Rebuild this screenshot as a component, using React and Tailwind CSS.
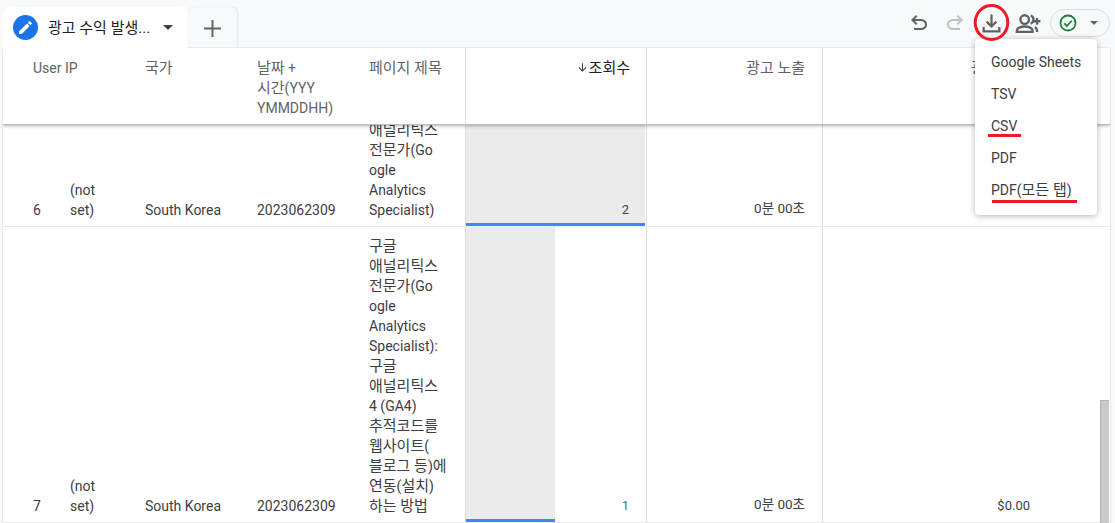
import React from "react";

function K({ children }) {
  const parts = String(children).split(/([\uac00-\ud7a3]+(?: [\uac00-\ud7a3]+)*)/);
  return (
    <>
      {parts.map((p, i) =>
        i % 2 === 1 ? <span key={i} className="text-[15px]">{p}</span> : <React.Fragment key={i}>{p}</React.Fragment>
      )}
    </>
  );
}

function Undo({ flip, color }) {
  return (
    <svg viewBox="0 0 24 24" width="24" height="24" fill={color} className={flip ? "-scale-x-100" : ""}>
      <path d="M7 19v-2h7.1q1.575 0 2.738-1T18 13.5q0-1.5-1.162-2.5T14.1 10H7.8l2.6 2.6L9 14 4 9l5-5 1.4 1.4L7.8 8h6.3q2.425 0 4.163 1.575T20 13.5q0 2.35-1.738 3.925T14.1 19z" />
    </svg>
  );
}

function Row({ h, index, title, views, viewsBar, revenue }) {
  return (
    <div className={`flex shrink-0 items-stretch border-b border-[#e8eaed] text-[14px] leading-5 text-[#3c4043] ${h}`}>
      <div className="w-[30px] shrink-0" />
      <div className="flex w-[37px] shrink-0 items-end pb-[6px]">{index}</div>
      <div className="flex w-[75px] shrink-0 items-end pb-[6px]"><span>(not<br />set)</span></div>
      <div className="flex w-[112px] shrink-0 items-end pb-[6px]"><span>South Korea</span></div>
      <div className="flex w-[112px] shrink-0 items-end pb-[6px]">2023062309</div>
      <div className="flex w-[96px] shrink-0 flex-col justify-end overflow-visible pb-[6px]">{title}</div>
      <div className="relative flex w-[181px] shrink-0 flex-col justify-end border-l border-[#dadce0] pr-[17px] pb-[6px] text-right text-[13px]">
        <div className="absolute top-0 bottom-0 left-0 flex flex-col" style={{ width: viewsBar }}>
          <div className="flex-1 bg-[#ebebeb]" />
          <div className="h-[3px] bg-[#4285f4]" />
        </div>
        <span className={`relative ${views === "1" ? "text-[#1a73a8]" : ""}`}>{views}</span>
      </div>
      <div className="flex w-[176px] shrink-0 flex-col justify-end border-l border-[#dadce0] pr-[17px] pb-[8px] text-right text-[13.5px]"><span>0분 00초</span></div>
      <div className="flex w-[227px] shrink-0 flex-col justify-end border-l border-[#dadce0] pb-[6px] pr-[19px] text-right text-[13px]">{revenue}</div>
    </div>
  );
}

function Lines({ items }) {
  return items.map((t, i) => <div key={i} className="h-5 whitespace-nowrap"><K>{t}</K></div>);
}

export default function App() {
  return (
    <div className="relative h-[523px] w-[1115px] overflow-hidden bg-[#f8f9fa] font-['Roboto','Noto_Sans_CJK_KR',sans-serif]">
      <div className="flex h-[48px] items-end pl-[3px]">
        <div className="flex h-[41px] w-[185px] items-center rounded-t-[8px] bg-white pl-[10px]">
          <div className="flex h-[25px] w-[25px] items-center justify-center rounded-full bg-[#1a73e8]">
            <svg viewBox="0 0 24 24" width="17" height="17" fill="white">
              <path d="M3 17.25V21h3.75L17.81 9.94l-3.75-3.75L3 17.25zM20.71 7.04a1 1 0 0 0 0-1.41l-2.34-2.34a1 1 0 0 0-1.41 0l-1.83 1.83 3.75 3.75 1.83-1.83z" />
            </svg>
          </div>
          <span className="ml-[10px] w-[111px] text-[15px] leading-5 whitespace-nowrap text-[#202124]">광고 수익 발생...</span>
          <span className="ml-[4px] h-0 w-0 border-x-[5px] border-t-[5px] border-x-transparent border-t-[#3c4043]" />
        </div>
        <div className="flex h-[41px] w-[50px] items-center justify-center rounded-t-[6px] border-r border-b border-[#e8eaed] bg-[#f8f9fa] shadow-[0_0_1px_rgba(0,0,0,0.2)]">
          <svg viewBox="0 0 24 24" width="29" height="29" fill="#5f6368" className="translate-y-[1px]"><path d="M11.2 5h1.6v6.2H19v1.6h-6.2V19h-1.6v-6.2H5v-1.6h6.2z" /></svg>
        </div>
        <div className="flex flex-1 items-center justify-end self-start pt-[9px] pr-[5px]">
          <div className="flex w-9 justify-center"><Undo color="#5f6368" /></div>
          <div className="flex w-9 justify-center"><Undo flip color="#bdc1c6" /></div>
          <div className="flex w-9 justify-center">
            <svg viewBox="0 0 24 24" width="27" height="27" fill="#5f6368"><path d="M12 16l-5-5 1.4-1.45 2.6 2.6V4h2v8.15l2.6-2.6L17 11zm-8 4v-5h2v3h12v-3h2v5z" /></svg>
          </div>
          <div className="flex w-9 justify-center">
            <svg viewBox="0 0 24 24" width="27" height="27" fill="none" stroke="#5f6368" strokeWidth="2.1">
              <circle cx="9.5" cy="8.5" r="3.8" />
              <path d="M2.5 19.5v-1.2c0-2.2 3.4-3.6 7-3.6s7 1.4 7 3.6v1.2z" />
              <path d="M14.8 4.9a3.8 3.8 0 0 1 0 7.2M18.5 15.2c1.3.7 2 1.8 2 3.1v1.2" />
              <path d="M20.5 7v6M17.5 10h6" />
            </svg>
          </div>
          <div className="ml-[5px] flex h-[28px] w-[60px] items-center rounded-full border border-[#dadce0] pl-[8px]">
            <svg viewBox="0 0 24 24" width="18" height="18" fill="none" stroke="#188038" strokeWidth="2.4">
              <circle cx="12" cy="12" r="10" />
              <path d="M7 12.5l3.5 3.5L17 9" stroke="#188038" />
            </svg>
            <span className="ml-[13px] h-0 w-0 border-x-[4px] border-t-[4px] border-x-transparent border-t-[#5f6368]" />
          </div>
        </div>
      </div>

      <div className="ml-[3px] flex h-[475px] w-[1107px] flex-col overflow-hidden bg-white shadow-[0_0_2px_rgba(0,0,0,0.2)]">
        <div className="z-10 flex h-[77px] shrink-0 border-b border-[#bdbdbd] bg-white text-[14px] leading-5 text-[#5f6368] shadow-[0_1px_3px_rgba(0,0,0,0.3)]">
          <div className="w-[30px] shrink-0" />
          <div className="w-[112px] shrink-0 pt-[10px]">User IP</div>
          <div className="w-[112px] shrink-0 pt-[10px]"><K>국가</K></div>
          <div className="w-[112px] shrink-0 pt-[10px]"><K>날짜 +</K><br /><K>시간(YYY</K><br />YMMDDHH)</div>
          <div className="w-[96px] shrink-0 pt-[10px] whitespace-nowrap"><K>페이지 제목</K></div>
          <div className="flex w-[181px] shrink-0 justify-end border-l border-[#dadce0] pt-[10px] pr-[16px] text-[#202124]">
            <span className="flex items-start">
              <svg viewBox="0 0 24 24" width="13" height="13" fill="#3c4043" className="mt-[3px]"><path d="M11 4h2v12l5-5 1.4 1.4L12 20l-7.4-7.6L6 11l5 5z" /></svg>
              <K>조회수</K>
            </span>
          </div>
          <div className="w-[176px] shrink-0 border-l border-[#dadce0] pt-[10px] pr-[17px] text-right"><K>광고 노출</K></div>
          <div className="w-[227px] shrink-0 border-l border-[#dadce0] pt-[10px] pr-[19px] text-right"><K>광고 수익</K></div>
        </div>
        <div className="flex h-[102px] shrink-0 flex-col justify-end overflow-hidden">
          <Row
            h="h-[102px]"
            index="6"
            views="2"
            viewsBar="179px"
            title={<Lines items={["애널리틱스", "전문가(Go", "ogle", "Analytics", "Specialist)"]} />}
            revenue=""
          />
        </div>
        <Row
          h="h-[296px]"
          index="7"
          views="1"
          viewsBar="89px"
          title={<Lines items={["구글", "애널리틱스", "전문가(Go", "ogle", "Analytics", "Specialist):", "구글", "애널리틱스", "4 (GA4)", "추적코드를", "웹사이트(", "블로그 등)에", "연동(설치)", "하는 방법"]} />}
          revenue="$0.00"
        />
      </div>

      <div className="absolute top-[400px] right-[6px] h-[123px] w-[9px] border-t border-l border-[#b4b4b4] bg-[#c9c9c9]" />

      <div className="absolute top-[39px] left-[975px] z-20 flex h-[176px] w-[122px] flex-col rounded-[4px] bg-white py-[7px] text-[14px] leading-5 text-[#3c4043] shadow-[0_1px_6px_rgba(0,0,0,0.3)]">
        {["Google Sheets", "TSV", "CSV", "PDF", "PDF(모든 탭)"].map((t) => (
          <div key={t} className="flex h-[32px] items-center pl-[16px] whitespace-nowrap"><span><K>{t}</K></span></div>
        ))}
      </div>

      <svg className="absolute top-0 left-[968px] z-30" width="46" height="44" viewBox="0 0 46 44" fill="none">
        <ellipse cx="23.5" cy="22.5" rx="16.3" ry="17" stroke="#ed1c24" strokeWidth="3" />
      </svg>
      <div className="absolute top-[134px] left-[988px] z-30 h-[3px] w-[33px] bg-[#ed1c24]" />
      <div className="absolute top-[200px] left-[992px] z-30 h-[3px] w-[85px] bg-[#ed1c24]" />
    </div>
  );
}
